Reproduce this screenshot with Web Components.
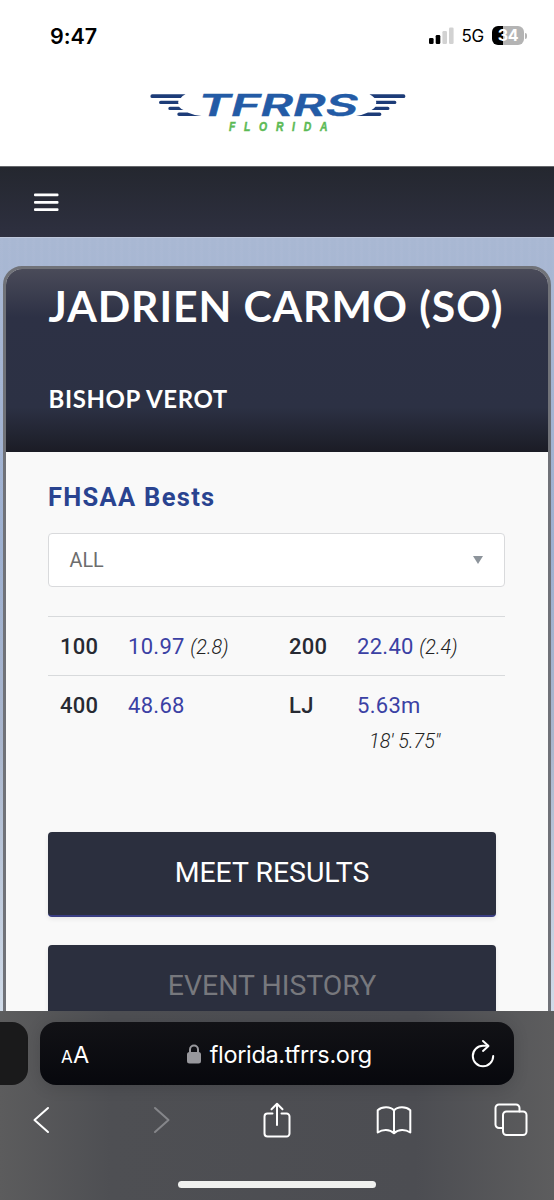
<!DOCTYPE html>
<html lang="en">
<head>
<meta charset="utf-8">
<title>Jadrien Carmo - TFRRS</title>
<style>
  body { margin: 0; background: #fff; }
</style>
</head>
<body>
<phone-screen>
  <status-bar slot="top"></status-bar>
  <site-logo slot="top"></site-logo>
  <site-nav slot="top"></site-nav>
  <athlete-card name="JADRIEN CARMO (SO)" team="BISHOP VEROT">
    <bests-panel></bests-panel>
    <tab-button active>MEET RESULTS</tab-button>
    <tab-button>EVENT HISTORY</tab-button>
  </athlete-card>
  <browser-bar slot="bottom">florida.tfrrs.org</browser-bar>
</phone-screen>

<script>
class PhoneScreen extends HTMLElement {
  connectedCallback() {
    this.attachShadow({ mode: 'open' });
    this.shadowRoot.innerHTML = `
      <style>
        :host {
          display: flex;
          flex-direction: column;
          width: 554px;
          height: 1200px;
          overflow: hidden;
          font-family: Roboto, sans-serif;
        }
        main {
          flex: 1;
          min-height: 0;
          overflow: hidden;
          box-sizing: border-box;
          padding: 28px 3px 0;
          background:
            repeating-linear-gradient(90deg, rgba(255,255,255,.02) 0 3px, transparent 3px 8px),
            linear-gradient(180deg, #a9b8d3 0%, #9cafd0 40%, #a8b5cc 65%, #d0dbe9 100%);
          border-top: 1px solid #bfc8dc;
        }
      </style>
      <slot name="top"></slot>
      <main><slot></slot></main>
      <slot name="bottom"></slot>
    `;
  }
}
customElements.define('phone-screen', PhoneScreen);

class StatusBar extends HTMLElement {
  connectedCallback() {
    this.attachShadow({ mode: 'open' });
    this.shadowRoot.innerHTML = `
      <style>
        :host {
          display: flex;
          justify-content: space-between;
          align-items: center;
          box-sizing: border-box;
          height: 71px;
          padding: 0 27px 0 50px;
          font-family: Inter, sans-serif;
          color: #000;
        }
        .time { font-size: 21.500px; font-weight: 600; letter-spacing: -.1px; }
        .right { display: flex; align-items: center; }
        .net { font-size: 17px; font-weight: 400; margin: 1px 8px 0 7px; letter-spacing: -.2px; }
        .battery {
          width: 32px;
          height: 19px;
          border-radius: 6px;
          background: linear-gradient(90deg, #000 0 11px, #b4b4b4 11px);
          color: #fff;
          font-size: 16px;
          font-weight: 700;
          line-height: 19px;
          text-align: center;
          letter-spacing: -.4px;
        }
        .cap { width: 2px; height: 6px; margin-left: 1px; border-radius: 0 2px 2px 0; background: #b4b4b4; }
      </style>
      <span class="time">9:47</span>
      <div class="right">
        <svg width="25" height="18" viewBox="0 0 25 18">
          <rect x="0" y="11" width="4.6" height="6" rx="1.3"/>
          <rect x="6.7" y="8" width="4.6" height="9" rx="1.3"/>
          <rect x="13.4" y="4" width="4.6" height="13" rx="1.3" fill="#d2d2d2"/>
          <rect x="20" y="0.5" width="4.6" height="16.5" rx="1.3" fill="#d2d2d2"/>
        </svg>
        <span class="net">5G</span>
        <span class="battery">34</span>
        <span class="cap"></span>
      </div>
    `;
  }
}
customElements.define('status-bar', StatusBar);

class SiteLogo extends HTMLElement {
  connectedCallback() {
    this.attachShadow({ mode: 'open' });
    this.shadowRoot.innerHTML = `
      <style>
        :host {
          display: flex;
          justify-content: center;
          box-sizing: border-box;
          height: 95px;
          padding-top: 15px;
        }
        text { font-style: italic; }
      </style>
      <svg width="275" height="54" viewBox="0 0 275 54">
        <g fill="#1d3c78">
          <path d="M12.300 8.300H45.500Q42 10 40.800 12.100H12.300a1.900 1.900 0 0 1 0-3.800z"/>
          <path d="M20.700 14.700H38.500Q37.800 16.500 38.500 18.100H20.700a1.700 1.700 0 0 1 0-3.400z"/>
          <path d="M30 20.700H39Q41 23 43.500 24.100H30a1.700 1.700 0 0 1 0-3.400z"/>
          <path d="M39 26.600H47.500Q54 29.500 61.500 30H39a1.700 1.700 0 0 1 0-3.400z"/>
          <path d="M229.500 8.300h34a1.900 1.900 0 0 1 0 3.800H234.500Q232.500 9.800 229.500 8.300z"/>
          <path d="M236 14.700h18.700a1.700 1.700 0 0 1 0 3.400H236Q236.500 16.300 236 14.700z"/>
          <path d="M235.500 20.700h12.300a1.700 1.700 0 0 1 0 3.400H231.500Q234 22.700 235.500 20.700z"/>
          <path d="M228 26.600h11.700a1.700 1.700 0 0 1 0 3.400H216Q223 29 228 26.600z"/>
        </g>
        <text x="58" y="29.800" font-family="Inter, sans-serif" font-weight="600" font-size="29.300" fill="#235ba6" stroke="#235ba6" stroke-width=".4" textLength="160" lengthAdjust="spacingAndGlyphs">TFRRS</text>
        <text x="89" y="45" font-family="Liberation Sans, sans-serif" font-weight="700" font-size="13" fill="#5cba55" stroke="#5cba55" stroke-width=".5" transform="translate(89 0) scale(.8 1) translate(-89 0)" textLength="123" lengthAdjust="spacing">FLORIDA</text>
      </svg>
    `;
  }
}
customElements.define('site-logo', SiteLogo);

class SiteNav extends HTMLElement {
  connectedCallback() {
    this.attachShadow({ mode: 'open' });
    this.shadowRoot.innerHTML = `
      <style>
        :host {
          display: flex;
          align-items: center;
          box-sizing: border-box;
          height: 71px;
          padding-left: 34px;
          border-top: 1px solid #65676b;
          background: linear-gradient(180deg, #24272f, #2e3040);
        }
      </style>
      <svg width="25" height="19" viewBox="0 0 25 19" fill="#fff">
        <rect y="0.4" width="24.500" height="2.800" rx="1"/>
        <rect y="7.900" width="24.500" height="2.800" rx="1"/>
        <rect y="15.300" width="24.500" height="2.800" rx="1"/>
      </svg>
    `;
  }
}
customElements.define('site-nav', SiteNav);

class AthleteCard extends HTMLElement {
  connectedCallback() {
    this.attachShadow({ mode: 'open' });
    this.shadowRoot.innerHTML = `
      <style>
        :host {
          display: block;
          box-sizing: border-box;
          height: 900px;
          border: 3px solid #707278;
          border-radius: 19px 19px 0 0;
          background: #f9f9f9;
          overflow: hidden;
        }
        header {
          box-sizing: border-box;
          height: 183px;
          padding: 12px 0 0 42.500px;
          color: #fff;
          font-family: Lato, sans-serif;
          white-space: nowrap;
          background: linear-gradient(180deg, #4a4b59 0, #2d3145 48px, #2c3144 138px, #1b1c25 183px);
        }
        h1 { margin: 0; font-size: 42.700px; font-weight: 700; line-height: 50px; letter-spacing: .88px; }
        h2 { margin: 53px 0 0; font-size: 24px; font-weight: 700; line-height: 30px; letter-spacing: .62px; }
        .body { padding: 0 40px 0 42px; }
      </style>
      <header>
        <h1>${this.getAttribute('name')}</h1>
        <h2>${this.getAttribute('team')}</h2>
      </header>
      <div class="body"><slot></slot></div>
    `;
  }
}
customElements.define('athlete-card', AthleteCard);

class BestsPanel extends HTMLElement {
  connectedCallback() {
    this.attachShadow({ mode: 'open' });
    this.shadowRoot.innerHTML = `
      <style>
        :host { display: block; height: 380px; box-sizing: border-box; padding-top: 30px; }
        h3 { margin: 0 0 21px; font-size: 25.500px; line-height: 30px; font-weight: 700; letter-spacing: 1.300px; color: #294390; }
        .select {
          display: flex;
          align-items: center;
          justify-content: space-between;
          box-sizing: border-box;
          width: 457px;
          height: 54px;
          padding: 0 21px 0 20.500px;
          border: 1px solid #d9dadc;
          border-radius: 4px;
          background: #fff;
          color: #6d6d6d;
          font-size: 19.800px;
        }
        .arrow { border: 5px solid transparent; border-top: 8px solid #8d949b; border-bottom: 0; }
        .grid { width: 457px; margin-top: 29px; }
        .row {
          display: grid;
          grid-template-columns: 68px 161px 68px 1fr;
          box-sizing: border-box;
          height: 59px;
          padding: 15px 0 0 12px;
          border-top: 1px solid #d8dadc;
          font-size: 22px;
          line-height: 30px;
          white-space: nowrap;
        }
        b { font-weight: 500; color: #272a33; letter-spacing: .3px; }
        a { color: #3b41a4; letter-spacing: .3px; }
        em { font-size: 19.800px; font-weight: 300; color: #222; }
        .imperial { display: block; margin: 6px 0 0 12px; }
      </style>
      <h3>FHSAA Bests</h3>
      <div class="select"><span>ALL</span><i class="arrow"></i></div>
      <div class="grid">
        <div class="row"><b>100</b><span><a>10.97</a> <em>(2.8)</em></span><b>200</b><span><a>22.40</a> <em>(2.4)</em></span></div>
        <div class="row"><b>400</b><span><a>48.68</a></span><b>LJ</b><span><a>5.63m</a><em class="imperial">18' 5.75"</em></span></div>
      </div>
    `;
  }
}
customElements.define('bests-panel', BestsPanel);

class TabButton extends HTMLElement {
  connectedCallback() {
    this.attachShadow({ mode: 'open' });
    this.shadowRoot.innerHTML = `
      <style>
        :host {
          display: block;
          box-sizing: border-box;
          width: 448px;
          height: 85px;
          margin-bottom: 27.500px;
          padding-top: 21px;
          border-radius: 4px;
          background: #2b2f3e;
          color: #77787d;
          text-align: center;
          font-size: 28.400px;
          line-height: 40px;
          box-shadow: 0 2px 5px rgba(0, 0, 0, .08);
        }
        :host([active]) { color: #fff; border-bottom: 2px solid #393d82; }
      </style>
      <slot></slot>
    `;
  }
}
customElements.define('tab-button', TabButton);

class BrowserBar extends HTMLElement {
  connectedCallback() {
    this.attachShadow({ mode: 'open' });
    this.shadowRoot.innerHTML = `
      <style>
        :host {
          display: flex;
          flex-direction: column;
          box-sizing: border-box;
          height: 189px;
          padding-top: 11px;
          background: linear-gradient(90deg, #5c5c5d 0, #4e4f53 20%, #4c4d52 75%, #5d5d5e 100%);
          color: #fff;
          font-family: Inter, sans-serif;
        }
        .tabs { display: flex; gap: 12px; height: 63px; }
        .prev { width: 28px; border-radius: 0 16px 16px 0; background: #1a1a1b; }
        .address {
          display: flex;
          align-items: center;
          justify-content: space-between;
          box-sizing: border-box;
          width: 474px;
          padding: 0 19px 0 21px;
          border-radius: 16px;
          background: linear-gradient(180deg, #121216, #07080d);
          box-shadow: 0 2px 16px rgba(0, 0, 0, .13);
        }
        .aa { font-size: 23.500px; letter-spacing: .3px; padding-top: 1px; }
        .aa small { font-size: 17px; }
        .url { display: flex; align-items: center; gap: 9px; font-size: 23.500px; letter-spacing: -.33px; padding: 1px 2px 0 0; }
        .tools { display: flex; align-items: center; height: 70px; padding-left: 33px; }
        .forward { margin-left: 103px; }
        .share { margin-left: 93px; }
        .book { margin-left: 85px; }
        .pages { margin-left: 82px; }
        .home { width: 198px; height: 7px; margin: 26px auto 0; border-radius: 4px; background: #f0f1ef; }
        svg { fill: none; stroke: #fff; stroke-width: 2; stroke-linecap: round; stroke-linejoin: round; }
      </style>
      <div class="tabs">
        <div class="prev"></div>
        <div class="address">
          <span class="aa"><small>A</small>A</span>
          <span class="url">
            <svg width="14" height="20" viewBox="0 0 14 20" style="stroke:#98989d">
              <rect x="1" y="9" width="12" height="9.500" rx="1.500" fill="#98989d"/>
              <path d="M3 9V5.500a4 4 0 0 1 8 0V9"/>
            </svg>
            <slot></slot>
          </span>
          <svg width="24" height="30" viewBox="0 0 24 30">
            <path d="M17 6.800H12A10.200 10.200 0 1 0 22.200 17"/>
            <path d="M12 2l5.500 4.900-5.500 5"/>
          </svg>
        </div>
      </div>
      <div class="tools">
        <svg class="back" width="17" height="28" viewBox="0 0 17 28"><path d="M15 2L1.500 14 15 26"/></svg>
        <svg class="forward" width="17" height="28" viewBox="0 0 17 28" style="stroke:#85868a"><path d="M2 2l13.500 12L2 26"/></svg>
        <svg class="share" width="28" height="36" viewBox="0 0 28 36">
          <path d="M9.500 11.500H4.500a3 3 0 0 0-3 3v17a3 3 0 0 0 3 3h19a3 3 0 0 0 3-3v-17a3 3 0 0 0-3-3h-5"/>
          <path d="M14 23V2M8.500 7.300L14 1.700l5.500 5.600"/>
        </svg>
        <svg class="book" width="36" height="30" viewBox="0 0 36 30">
          <path d="M18 5.500C14.500 1.300 6 1.300 1.700 5.300V27.500C6.500 24.300 13.500 24 18 28.200 22.500 24 29.500 24.300 34.300 27.500V5.300C30 1.300 21.500 1.300 18 5.500zV28"/>
        </svg>
        <svg class="pages" width="34" height="34" viewBox="0 0 34 34">
          <path d="M9 25H5a3.500 3.500 0 0 1-3.500-3.500V5A3.500 3.500 0 0 1 5 1.500h17A3.500 3.500 0 0 1 25.500 5v3.500"/>
          <rect x="9" y="8.500" width="23.500" height="23.500" rx="3.500"/>
        </svg>
      </div>
      <div class="home"></div>
    `;
  }
}
customElements.define('browser-bar', BrowserBar);
</script>
</body>
</html>
